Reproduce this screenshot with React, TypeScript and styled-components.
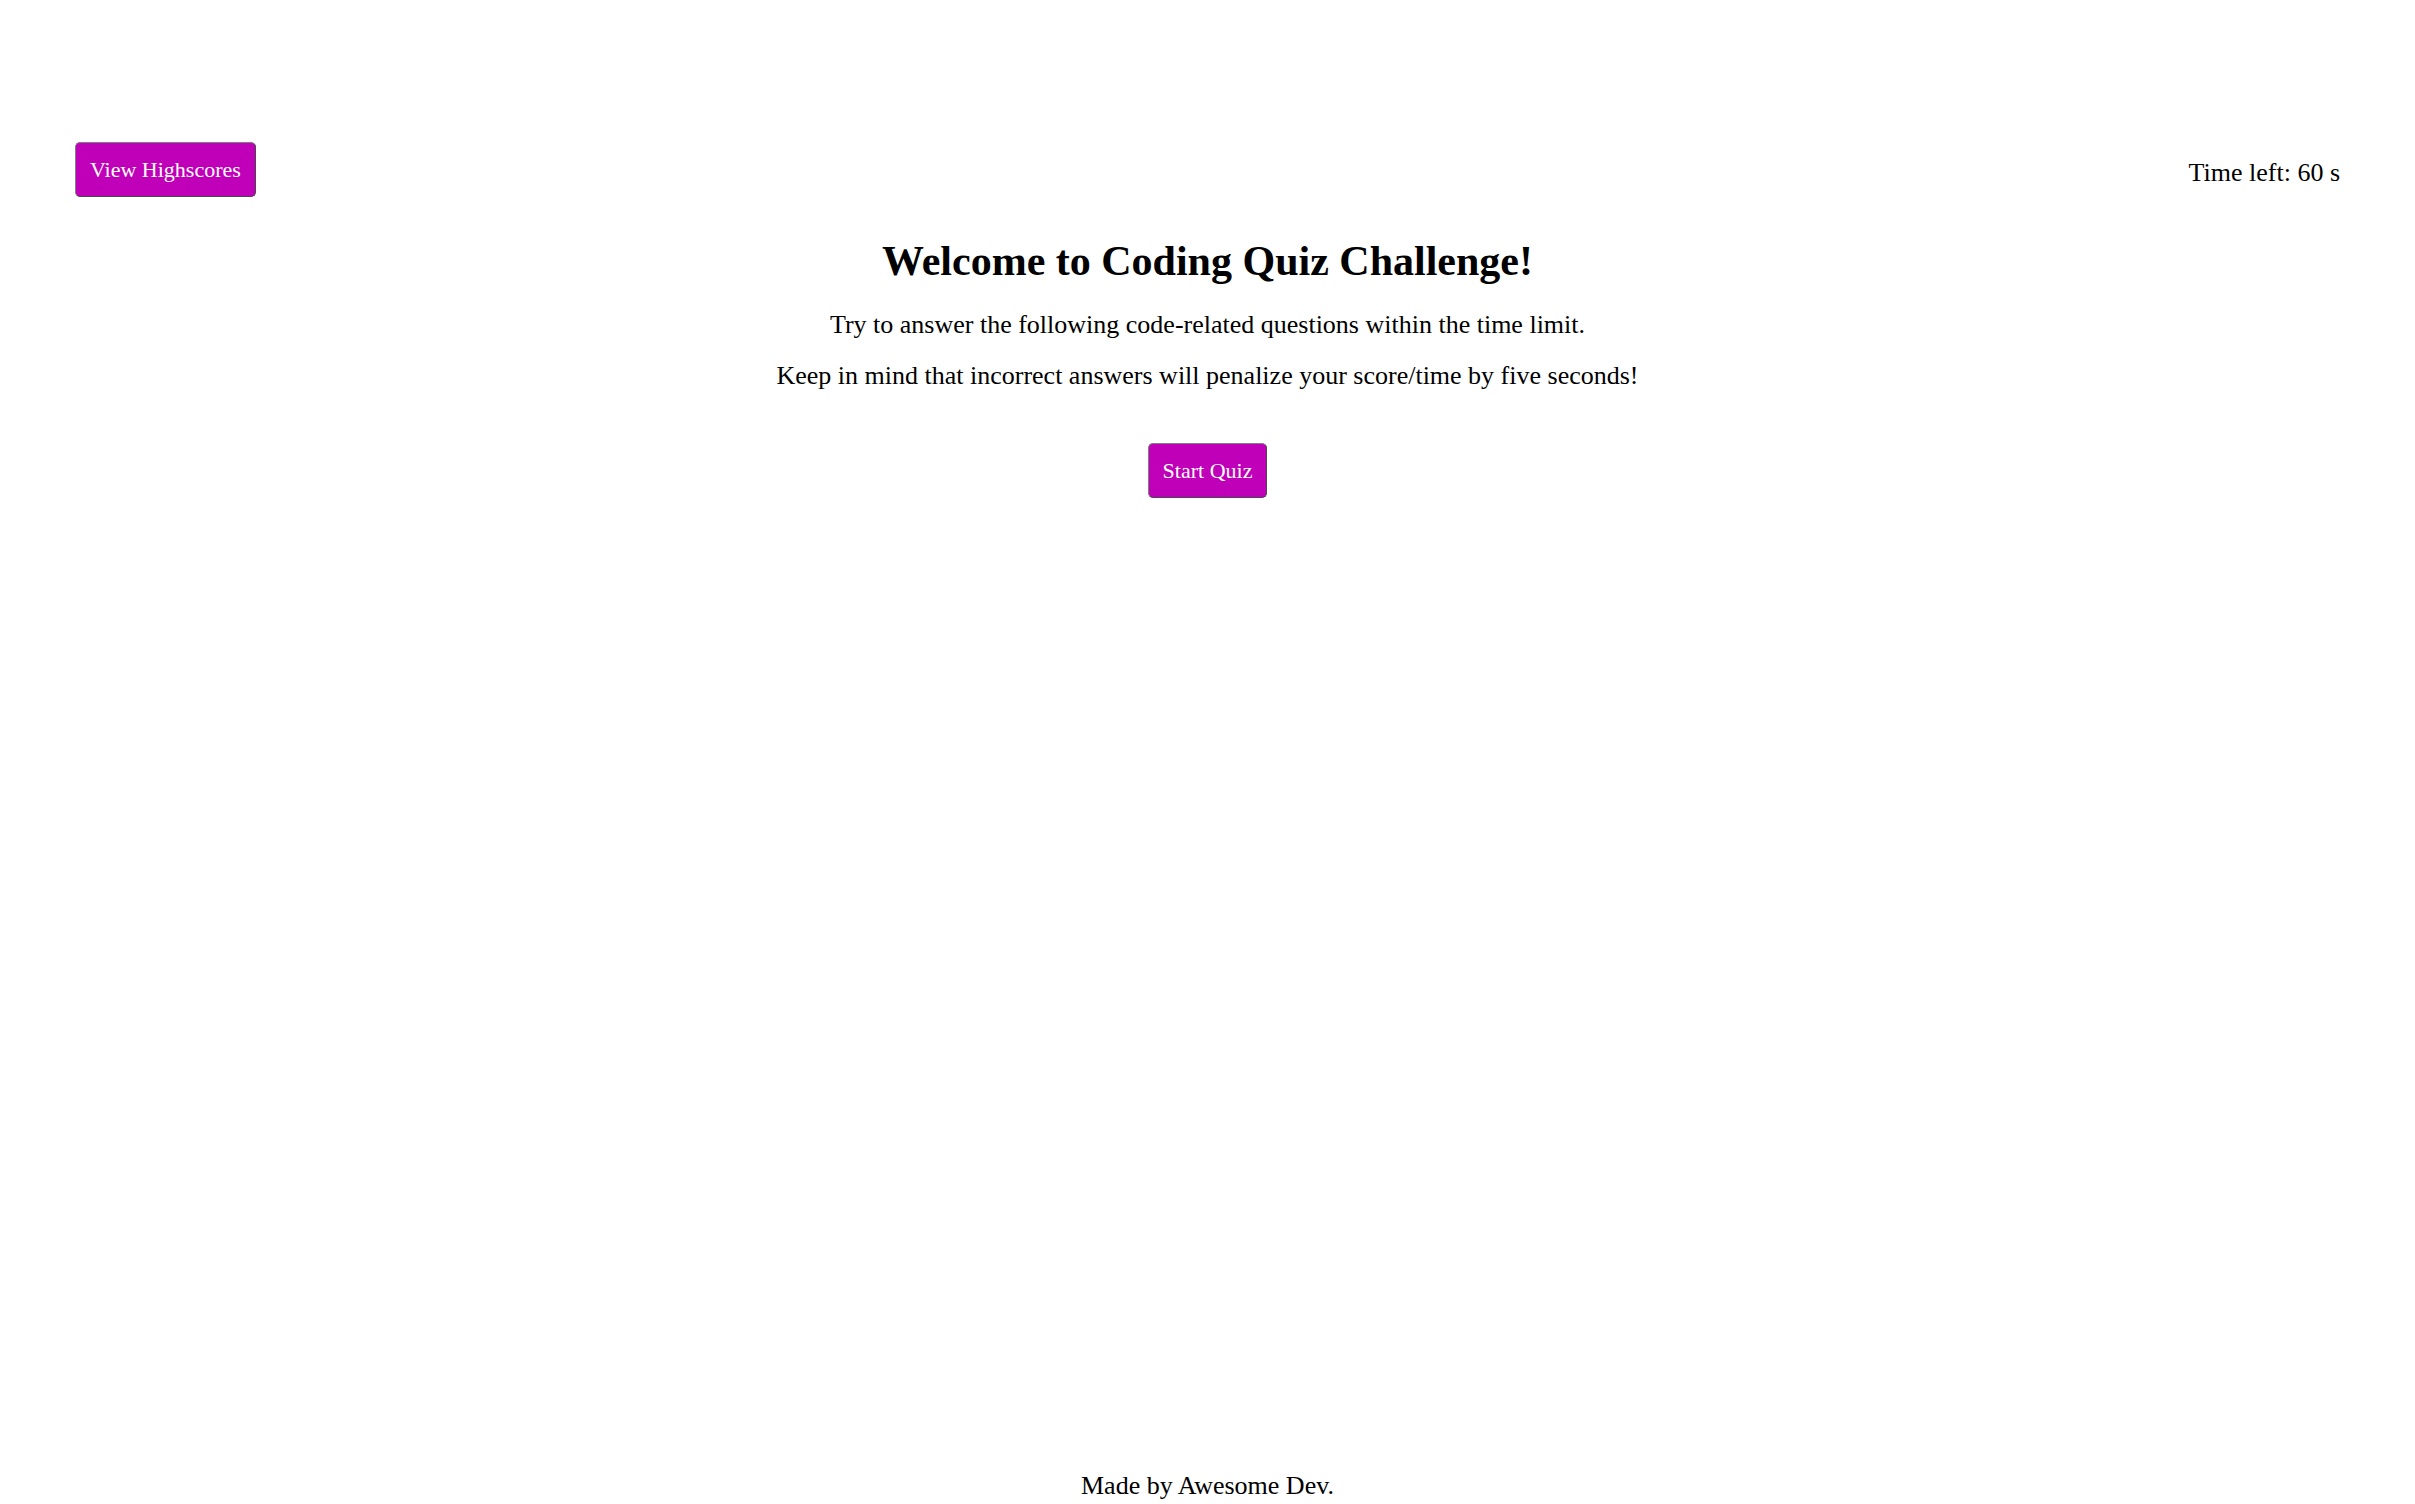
import React, { useState } from "react";
import styled, { createGlobalStyle } from "styled-components";

const GlobalStyle = createGlobalStyle`
  body {
    margin: 0;
    background: #fff;
    color: #000;
    font-family: "Liberation Serif", serif;
    font-size: 26px;
    line-height: 28px;
  }
`;

const Page = styled.div`
  box-sizing: border-box;
  min-height: 100vh;
  display: flex;
  flex-direction: column;
  padding: 142px 75px 4px;
`;

const Header = styled.header`
  display: flex;
  justify-content: space-between;
  align-items: center;
`;

const Button = styled.button`
  padding: 14px;
  border: 1px solid;
  border-color: #808080 #484848 #484848 #808080;
  border-radius: 5px;
  background: #c000b8;
  color: #fff;
  font-family: inherit;
  font-size: 22px;
  line-height: 25px;
  cursor: pointer;
`;

const Timer = styled.p`
  margin: 6px 0 0;
`;

const Main = styled.main`
  flex: 1;
  display: flex;
  flex-direction: column;
  align-items: center;
  text-align: center;
`;

const Title = styled.h1`
  margin: 44px 0 30px;
  font-size: 42px;
  line-height: 40px;
`;

const Text = styled.p`
  margin: 0 0 23px;
`;

const Actions = styled.div`
  margin-top: 30px;
`;

const Footer = styled.footer`
  text-align: center;
`;

export default function App() {
  const [timeLeft] = useState(60);
  return (
    <>
      <GlobalStyle />
      <Page>
        <Header>
          <Button type="button">View Highscores</Button>
          <Timer>Time left: {timeLeft} s</Timer>
        </Header>
        <Main>
          <Title>Welcome to Coding Quiz Challenge!</Title>
          <Text>Try to answer the following code-related questions within the time limit.</Text>
          <Text>Keep in mind that incorrect answers will penalize your score/time by five seconds!</Text>
          <Actions>
            <Button type="button">Start Quiz</Button>
          </Actions>
        </Main>
        <Footer>Made by Awesome Dev.</Footer>
      </Page>
    </>
  );
}
